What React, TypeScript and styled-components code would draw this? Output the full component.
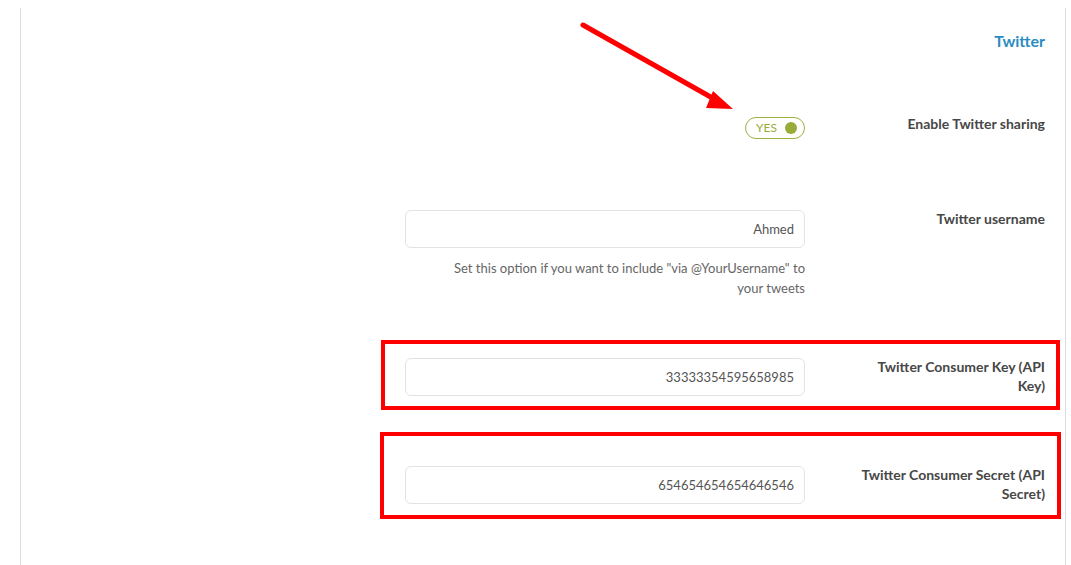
import React from 'react';
import styled, {createGlobalStyle} from 'styled-components';

const GlobalStyle = createGlobalStyle`
  html, body {
    margin: 0;
    padding: 0;
    background: #fff;
  }
  body {
    font-family: Lato, "Open Sans", "Liberation Sans", sans-serif;
    color: #444;
  }
`;

type Field = {
  label: string;
  value: string;
  help?: string;
  space: number;
};

const fields: Field[] = [
  {
    label: 'Twitter username',
    value: 'Ahmed',
    help: 'Set this option if you want to include "via @YourUsername" to your tweets',
    space: 60,
  },
  {label: 'Twitter Consumer Key (API Key)', value: '33333354595658985', space: 70},
  {label: 'Twitter Consumer Secret (API Secret)', value: '654654654654646546', space: 0},
];

const App: React.FC = () => {
  return (
    <Page>
      <GlobalStyle />
      <Panel>
        <Heading>Twitter</Heading>
        <Form>
          <Row $space={71}>
            <FieldCol>
              <Toggle>
                <span>YES</span>
                <Knob />
              </Toggle>
            </FieldCol>
            <Label>Enable Twitter sharing</Label>
          </Row>
          {fields.map((f) => (
            <Row key={f.label} $space={f.space}>
              <FieldCol>
                <TextInput type="text" defaultValue={f.value} />
                {f.help && <Help>{f.help}</Help>}
              </FieldCol>
              <Label>{f.label}</Label>
            </Row>
          ))}
        </Form>
      </Panel>

      {/* annotations drawn over the screenshot */}
      <Arrow width="1071" height="565" viewBox="0 0 1071 565">
        <line x1="583" y1="25" x2="716" y2="100" stroke="#ff0000" strokeWidth="5" strokeLinecap="round" />
        <polygon points="733,109 713,91 706,108" fill="#ff0000" />
      </Arrow>
      <RedBox $top={340} $left={381} $w={679} $h={70} />
      <RedBox $top={432} $left={380} $w={681} $h={87} />
    </Page>
  );
};

const Page = styled.div`
  position: relative;
  width: 1071px;
  height: 565px;
  overflow: hidden;
  padding-top: 8px;
  box-sizing: border-box;
`;

const Panel = styled.div`
  margin-left: 20px;
  width: 1046px;
  height: 557px;
  box-sizing: border-box;
  border-left: 1px solid #dcdcdc;
  border-right: 1px solid #dcdcdc;
  padding: 23px 20px 0 20px;
`;

const Heading = styled.h2`
  margin: 0;
  text-align: right;
  font-size: 16px;
  line-height: 20px;
  font-weight: 700;
  color: #2a8dbf;
`;

const Form = styled.div`
  margin-top: 64px;
  display: flex;
  flex-direction: column;
`;

const Row = styled.div<{$space: number}>`
  display: flex;
  justify-content: flex-end;
  align-items: flex-start;
  gap: 50px;
  margin-bottom: ${(p) => p.$space}px;
`;

const FieldCol = styled.div`
  width: 400px;
  display: flex;
  flex-direction: column;
  align-items: flex-end;
`;

const Label = styled.div`
  width: 190px;
  margin-top: -1px;
  text-align: right;
  font-size: 14px;
  line-height: 19px;
  font-weight: 700;
  color: #474747;
`;

const Toggle = styled.div`
  margin-top: 2px;
  width: 60px;
  height: 22px;
  box-sizing: border-box;
  border: 1px solid #9fb03f;
  border-radius: 11px;
  display: flex;
  align-items: center;
  justify-content: space-between;
  padding: 0 7px 0 10px;
  color: #9aab38;
  font-size: 12px;
  font-weight: 400;

  span {
    line-height: 1;
  }
`;

const Knob = styled.i`
  display: block;
  width: 12px;
  height: 12px;
  border-radius: 50%;
  background: #9aab38;
`;

const TextInput = styled.input`
  width: 400px;
  height: 38px;
  box-sizing: border-box;
  border: 1px solid #e3e3e3;
  border-radius: 6px;
  padding: 0 10px;
  text-align: right;
  font-family: Lato, "Open Sans", "Liberation Sans", sans-serif;
  font-size: 13px;
  color: #555;
  background: #fff;
  outline: none;
`;

const Help = styled.p`
  margin: 10px 0 0;
  max-width: 370px;
  text-align: right;
  font-size: 13px;
  line-height: 20px;
  color: #666;
`;

const Arrow = styled.svg`
  position: absolute;
  left: 0;
  top: 0;
  pointer-events: none;
`;

const RedBox = styled.div<{$top: number; $left: number; $w: number; $h: number}>`
  position: absolute;
  top: ${(p) => p.$top}px;
  left: ${(p) => p.$left}px;
  width: ${(p) => p.$w}px;
  height: ${(p) => p.$h}px;
  box-sizing: border-box;
  border: 4px solid #ff0000;
  pointer-events: none;
`;

export default App;
